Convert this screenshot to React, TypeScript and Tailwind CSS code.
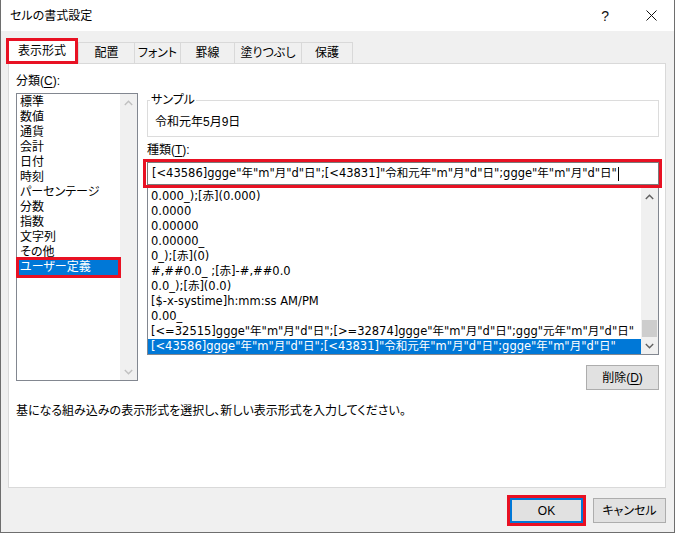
import React from "react";

const categories = [
  "標準",
  "数値",
  "通貨",
  "会計",
  "日付",
  "時刻",
  "パーセンテージ",
  "分数",
  "指数",
  "文字列",
  "その他",
  "ユーザー定義",
];

const formats = [
  "0.000_);[赤](0.000)",
  "0.0000",
  "0.00000",
  "0.00000_",
  "0_);[赤](0)",
  "#,##0.0_ ;[赤]-#,##0.0",
  "0.0_);[赤](0.0)",
  "[$-x-systime]h:mm:ss AM/PM",
  "0.00_",
  '[<=32515]ggge"年"m"月"d"日";[>=32874]ggge"年"m"月"d"日";ggg"元年"m"月"d"日"',
  '[<43586]ggge"年"m"月"d"日";[<43831]"令和元年"m"月"d"日";ggge"年"m"月"d"日"',
];

const tabs = [
  { label: "配置", w: "w-[57px] border-l" },
  { label: "フォント", w: "w-[46px]" },
  { label: "罫線", w: "w-[54px]" },
  { label: "塗りつぶし", w: "w-[67px]" },
  { label: "保護", w: "w-[51px]" },
];

const FORMAT_VALUE =
  '[<43586]ggge"年"m"月"d"日";[<43831]"令和元年"m"月"d"日";ggge"年"m"月"d"日"';

function Chevron({ up, color }: { up?: boolean; color: string }) {
  return (
    <svg width="9" height="6" viewBox="0 0 9 6">
      <polyline
        points={up ? "0.8,5 4.5,1.3 8.2,5" : "0.8,1 4.5,4.7 8.2,1"}
        fill="none"
        stroke={color}
        strokeWidth="1.4"
      />
    </svg>
  );
}

function ScrollBar({ enabled }: { enabled?: boolean }) {
  const color = enabled ? "#606060" : "#c0c0c0";
  return (
    <div className="flex w-[17px] shrink-0 flex-col bg-[#f0f0f0]">
      <div className="flex h-[17px] items-center justify-center">
        <Chevron up color={color} />
      </div>
      <div className="flex flex-1 flex-col justify-end">
        {enabled && <div className="mx-[1px] h-[17px] bg-[#cdcdcd]" />}
      </div>
      <div className="flex h-[17px] items-center justify-center">
        <Chevron color={color} />
      </div>
    </div>
  );
}

export default function App() {
  return (
    <div className="flex h-[533px] w-[675px] flex-col border-x border-b border-[#6e6e6e] bg-[#f0f0f0] font-['Liberation_Sans','Noto_Sans_CJK_JP',sans-serif] text-[12px] text-black [font-feature-settings:'palt']">
      {/* Title bar */}
      <div className="flex h-[31px] shrink-0 items-center justify-between bg-white pl-[9px] pr-[17px]">
        <span>セルの書式設定</span>
        <div className="flex items-center">
          <span className="text-[14px] leading-none text-[#111]">?</span>
          <svg className="ml-[37px]" width="11" height="11" viewBox="0 0 11 11">
            <path d="M0.5 0.5 L10.5 10.5 M10.5 0.5 L0.5 10.5" stroke="#111" strokeWidth="1" />
          </svg>
        </div>
      </div>

      <div className="flex flex-1 flex-col pl-[7px] pr-[8px]">
        {/* Tabs */}
        <div className="mt-[7px] flex h-[25px] items-end">
          <div className="relative z-10 -mb-[1px] -ml-[2px] flex h-[26px] w-[72px] items-center justify-center bg-white">
            表示形式
            <span className="absolute inset-0 border-[3px] border-[#e81123]" />
          </div>
          {tabs.map((t) => (
            <div
              key={t.label}
              className={`flex h-[21px] items-center justify-center border-r border-t border-[#d9d9d9] ${t.w}`}
            >
              {t.label}
            </div>
          ))}
        </div>

        {/* Panel */}
        <div className="h-[425px] border border-[#d9d9d9] bg-white pl-[7px] pr-[6px] pt-[10px]">
          <div className="leading-[15px]">
            分類(<span className="underline underline-offset-2">C</span>):
          </div>
          <div className="mt-[4px] flex items-start">
            {/* Category list */}
            <div className="flex h-[288px] w-[122px] shrink-0 border border-[#828790] bg-white">
              <div className="flex-1 pt-[1px]">
                {categories.map((c, i) =>
                  i === categories.length - 1 ? (
                    <div key={c} className="relative h-[15px] bg-[#0078d7] pl-[3px] leading-[15px] text-white">
                      {c}
                      <span className="absolute -bottom-[3px] -left-[1px] -right-[1px] -top-[3px] border-[3px] border-[#e81123]" />
                    </div>
                  ) : (
                    <div key={c} className="h-[15px] pl-[3px] leading-[15px]">
                      {c}
                    </div>
                  )
                )}
              </div>
              <ScrollBar />
            </div>

            {/* Right column */}
            <div className="ml-[9px] flex w-[512px] flex-col">
              <fieldset className="border border-[#dcdcdc] px-[2px] pb-[6px]">
                <legend className="px-[1px] leading-[15px]">サンプル</legend>
                <div className="pl-[5px] pt-[7px] leading-[15px]">令和元年5月9日</div>
              </fieldset>

              <div className="mt-[6px] leading-[15px]">
                種類(<span className="underline underline-offset-2">T</span>):
              </div>

              <div className="relative mt-[4px] flex h-[23px] items-center border border-[#7a7a7a] bg-white pl-[4px] font-['DejaVu_Sans','Noto_Sans_CJK_JP',sans-serif] text-[11.5px]">
                <span className="whitespace-pre">{FORMAT_VALUE}</span>
                <span className="ml-[1px] h-[14px] w-[1px] bg-black" />
                <span className="absolute -bottom-[4px] -left-[5px] -right-[4px] -top-[4px] border-[3px] border-[#e81123]" />
              </div>

              <div className="mt-[2px] flex h-[168px] border border-[#828790] bg-white font-['DejaVu_Sans','Noto_Sans_CJK_JP',sans-serif] text-[11.5px]">
                <div className="min-w-0 flex-1 overflow-hidden pt-[1px]">
                  {formats.map((f, i) => (
                    <div
                      key={f}
                      className={`h-[15px] whitespace-pre pl-[3px] leading-[15px] ${
                        i === formats.length - 1 ? "bg-[#0078d7] text-white" : ""
                      }`}
                    >
                      {f}
                    </div>
                  ))}
                </div>
                <ScrollBar enabled />
              </div>

              <button className="mt-[10px] h-[25px] w-[73px] self-end border border-[#adadad] bg-[#e1e1e1]">
                削除(<span className="underline underline-offset-2">D</span>)
              </button>
            </div>
          </div>

          <div className="mt-[14px] leading-[15px]">
            基になる組み込みの表示形式を選択し、新しい表示形式を入力してください。
          </div>
        </div>

        {/* Buttons */}
        <div className="flex justify-end gap-[10px] pt-[10px]">
          <button className="relative h-[25px] w-[73px] border-2 border-[#0078d7] bg-[#e1e1e1]">
            OK
            <span className="absolute -inset-[5px] border-[3px] border-[#e81123]" />
          </button>
          <button className="h-[25px] w-[73px] border border-[#adadad] bg-[#e1e1e1]">キャンセル</button>
        </div>
      </div>
    </div>
  );
}
